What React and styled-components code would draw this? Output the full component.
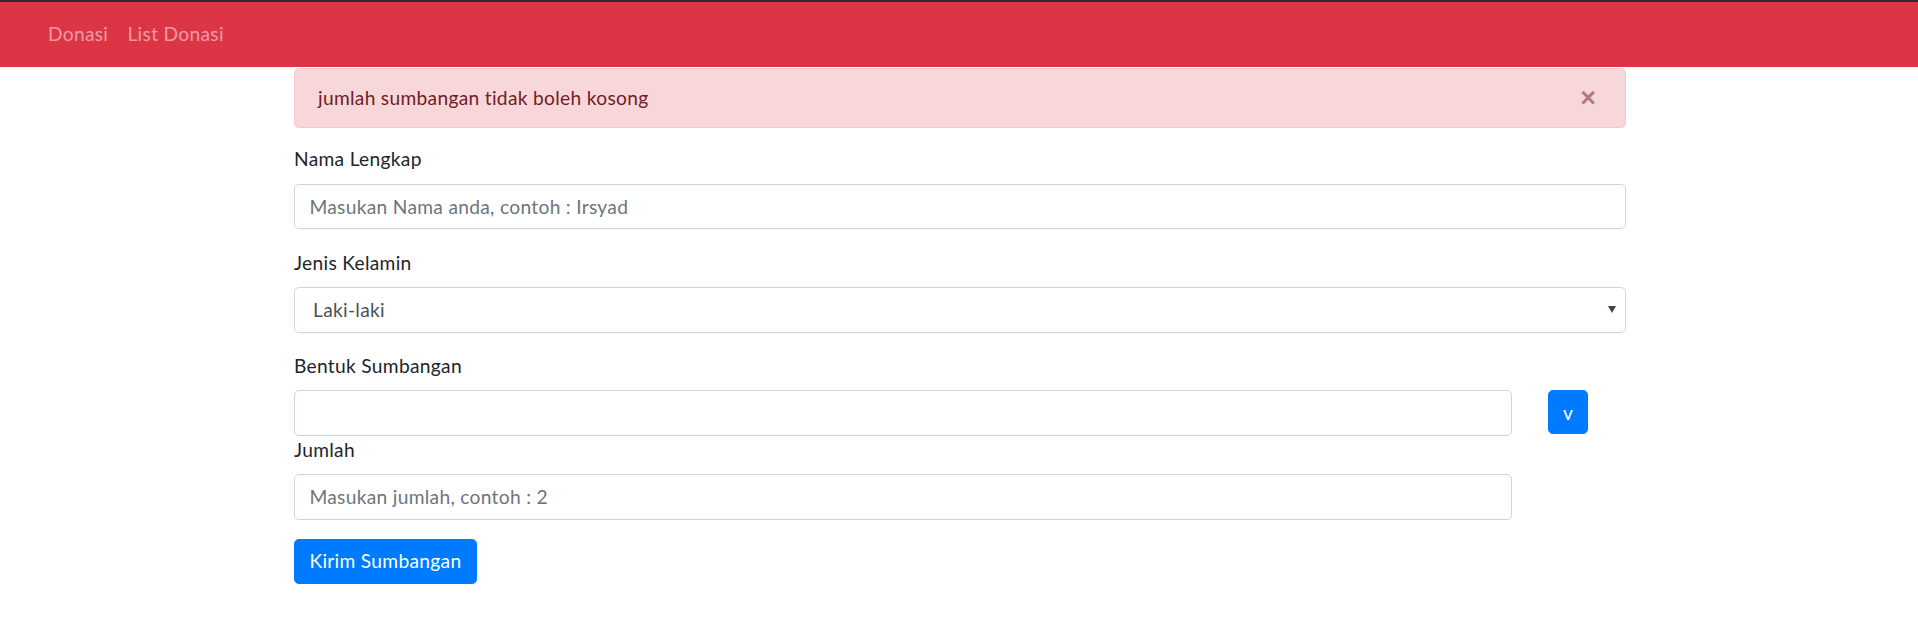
import React, { useState } from "react";
import styled, { createGlobalStyle } from "styled-components";

const GlobalStyle = createGlobalStyle`
  body {
    margin: 0;
    background: #fff;
    font-family: "Segoe UI", Lato, "Liberation Sans", sans-serif;
    font-size: 19.2px;
    letter-spacing: 0.3px;
    line-height: 1.5;
    color: #212529;
  }
  * {
    box-sizing: border-box;
  }
`;

const TopStrip = styled.div`
  height: 2px;
  background: #2d2d2d;
`;

const Navbar = styled.nav`
  height: 65px;
  background: #dc3545;
  display: flex;
  align-items: center;
  padding-left: 38.4px;
`;

const NavLink = styled.a`
  padding: 0 9.6px;
  color: rgba(255, 255, 255, 0.5);
  font-size: 19.2px;
  text-decoration: none;
  cursor: pointer;
`;

const Container = styled.div`
  width: 1334px;
  margin: 0 auto;
  padding: 1px 0 0 2px;
`;

const Alert = styled.div`
  height: 60px;
  display: flex;
  align-items: center;
  justify-content: space-between;
  padding: 0 27px 0 23px;
  margin-bottom: 17.4px;
  background: #f8d7da;
  border: 1px solid #f5c6cb;
  border-radius: 4.8px;
  color: #721c24;
`;

const CloseButton = styled.button`
  background: transparent;
  border: 0;
  padding: 0 2px;
  font-size: 27px;
  font-weight: 700;
  line-height: 1;
  color: #721c24;
  opacity: 0.5;
  text-shadow: 0 1px 0 #fff;
  font-family: "Liberation Sans", Arial, sans-serif;
  cursor: pointer;
`;

const FormGroup = styled.div`
  margin-bottom: 19.2px;
`;

const Label = styled.label`
  display: block;
  margin-bottom: 9.6px;
  line-height: 28.8px;
`;

const Input = styled.input`
  display: block;
  width: 100%;
  height: 45.6px;
  padding: 7.2px 14.4px;
  font-family: inherit;
  font-size: 19.2px;
  letter-spacing: 0.3px;
  color: #495057;
  background: #fff;
  border: 1px solid #ced4da;
  border-radius: 4.8px;
  outline: none;
  &::placeholder {
    color: #6c757d;
  }
`;

const SelectWrap = styled.div`
  position: relative;
`;

const Select = styled.select`
  display: block;
  width: 100%;
  height: 45.6px;
  padding: 0 14.4px 0 18px;
  font-family: inherit;
  font-size: 19.2px;
  letter-spacing: 0.3px;
  color: #495057;
  background: #fff;
  border: 1px solid #ced4da;
  border-radius: 4.8px;
  appearance: none;
  outline: none;
`;

const Caret = styled.span`
  position: absolute;
  right: 10px;
  top: 19px;
  width: 0;
  height: 0;
  border-left: 4px solid transparent;
  border-right: 4px solid transparent;
  border-top: 7px solid #3f454b;
  pointer-events: none;
`;

const Row = styled.div`
  display: flex;
  margin: 0 -18px;
`;

const Col = styled.div`
  flex: 0 0 ${(p) => (p.$span / 12) * 100}%;
  max-width: ${(p) => (p.$span / 12) * 100}%;
  padding: 0 18px;
`;

const Button = styled.button`
  display: inline-block;
  padding: 7.2px 14.4px;
  font-family: inherit;
  font-size: 19.2px;
  letter-spacing: 0.3px;
  line-height: 28.8px;
  color: #fff;
  background: #007bff;
  border: 1px solid #007bff;
  border-radius: 4.8px;
  cursor: pointer;
`;

const SmallButton = styled(Button)`
  width: 40px;
  height: 44px;
  padding: 0;
  line-height: 1;
`;

export default function App() {
  const [showAlert, setShowAlert] = useState(true);
  const [nama, setNama] = useState("");
  const [gender, setGender] = useState("Laki-laki");
  const [bentuk, setBentuk] = useState("");
  const [jumlah, setJumlah] = useState("");

  return (
    <>
      <GlobalStyle />
      <TopStrip />
      <Navbar>
        <NavLink>Donasi</NavLink>
        <NavLink>List Donasi</NavLink>
      </Navbar>
      <Container>
        {showAlert && (
          <Alert>
            <span>jumlah sumbangan tidak boleh kosong</span>
            <CloseButton onClick={() => setShowAlert(false)}>×</CloseButton>
          </Alert>
        )}
        <FormGroup>
          <Label>Nama Lengkap</Label>
          <Input
            placeholder="Masukan Nama anda, contoh : Irsyad"
            value={nama}
            onChange={(e) => setNama(e.target.value)}
          />
        </FormGroup>
        <FormGroup>
          <Label>Jenis Kelamin</Label>
          <SelectWrap>
            <Select value={gender} onChange={(e) => setGender(e.target.value)}>
              <option>Laki-laki</option>
              <option>Perempuan</option>
            </Select>
            <Caret />
          </SelectWrap>
        </FormGroup>
        <Label>Bentuk Sumbangan</Label>
        <Row>
          <Col $span={11}>
            <Input value={bentuk} onChange={(e) => setBentuk(e.target.value)} />
          </Col>
          <Col $span={1}>
            <SmallButton>v</SmallButton>
          </Col>
        </Row>
        <Row>
          <Col $span={11}>
            <FormGroup>
              <Label>Jumlah</Label>
              <Input
                placeholder="Masukan jumlah, contoh : 2"
                value={jumlah}
                onChange={(e) => setJumlah(e.target.value)}
              />
            </FormGroup>
          </Col>
        </Row>
        <Button>Kirim Sumbangan</Button>
      </Container>
    </>
  );
}
